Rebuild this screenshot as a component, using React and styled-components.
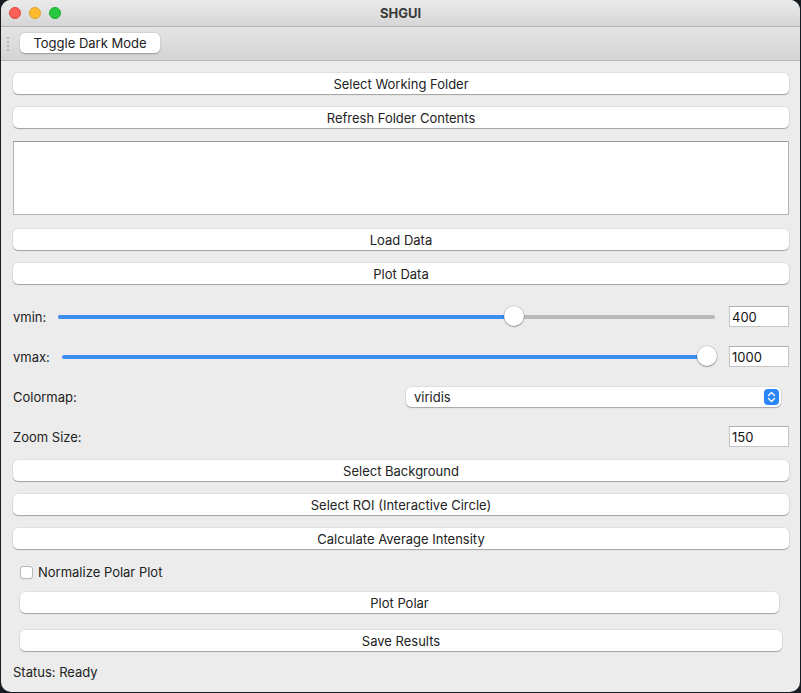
import React from 'react'
import styled, {createGlobalStyle} from 'styled-components'

const GlobalStyle = createGlobalStyle`
    html, body {
        margin: 0;
        padding: 0;
        background: #161c22;
    }
    body {
        font-family: Inter, "Noto Sans", "Liberation Sans", sans-serif;
        font-size: 13px;
        color: #222;
    }
`

const Window = styled.div`
    width: 799px;
    height: 692px;
    margin-left: 1px;
    border-radius: 10px;
    overflow: hidden;
    background: #ececec;
    display: flex;
    flex-direction: column;
`

const TitleBar = styled.header`
    position: relative;
    height: 26px;
    display: flex;
    align-items: center;
    justify-content: center;
    background: linear-gradient(#ebebeb, #d6d6d6);
    border-bottom: 1px solid #b3b3b3;
    font-weight: 700;
    font-size: 13px;
    color: #3a3a3a;
`

const Lights = styled.div`
    position: absolute;
    left: 8px;
    top: 7px;
    display: flex;
    gap: 8px;
`

const Light = styled.span`
    width: 12px;
    height: 12px;
    border-radius: 50%;
    box-sizing: border-box;
    background: ${props => props.color};
    border: 0.5px solid ${props => props.edge};
`

const ToolBar = styled.div`
    height: 33px;
    display: flex;
    align-items: center;
    gap: 10px;
    padding-left: 5px;
    background: linear-gradient(#e4e4e4, #d4d4d4);
    border-bottom: 1px solid #b9b9b9;
`

const ToolButton = styled.button`
    width: 140px;
    height: 20px;
    margin-top: -1px;
    border: none;
    border-radius: 5px;
    background: #fff;
    box-shadow: 0 0.5px 1.5px rgba(0, 0, 0, 0.3);
    font: inherit;
    color: #222;
    padding: 0;
`

const Content = styled.main`
    flex: 1;
    display: flex;
    flex-direction: column;
    padding: 12px 11px 0 12px;
`

const Button = styled.button`
    height: 21px;
    flex-shrink: 0;
    margin: ${props => props.space ?? 13}px ${props => props.right || 0}px 0 ${props => props.left || 0}px;
    border: none;
    border-radius: 5px;
    background: #fff;
    box-shadow: 0 0 0 0.5px rgba(0, 0, 0, 0.1), 0 1px 1px rgba(0, 0, 0, 0.28);
    font: inherit;
    color: #222;
    padding: 0;
`

const ListBox = styled.div`
    height: 74px;
    margin-top: 13px;
    box-sizing: border-box;
    background: #fff;
    border: 1px solid #b4b4b4;
    border-top-color: #9c9c9c;
`

const Row = styled.div`
    height: ${props => props.h || 21}px;
    margin-top: ${props => props.space || 13}px;
    display: flex;
    align-items: center;
    justify-content: space-between;
    flex-shrink: 0;
`

const Label = styled.span`
    white-space: nowrap;
`

const Slider = styled.div`
    flex: 1;
    position: relative;
    height: 21px;
    margin: 0 ${props => props.right}px 0 ${props => props.left}px;
    display: flex;
    align-items: center;
`

const Groove = styled.div`
    flex: 1;
    height: 4px;
    border-radius: 2px;
    background: #b9b9b9;
    overflow: hidden;
`

const Fill = styled.div`
    height: 100%;
    background: #3d8ef0;
`

const Thumb = styled.span`
    position: absolute;
    top: 0;
    width: 20px;
    height: 20px;
    margin-left: -10px;
    border-radius: 50%;
    background: #fff;
    box-shadow: 0 0 0 0.5px rgba(0, 0, 0, 0.2), 0 1px 1.5px rgba(0, 0, 0, 0.3);
`

const NumberField = styled.div`
    width: 60px;
    height: 21px;
    box-sizing: border-box;
    border: 1px solid #c4c4c4;
    border-top-color: #b0b0b0;
    background: #fff;
    padding-left: 2px;
    display: flex;
    align-items: center;
    color: #111;
`

const Combo = styled.div`
    width: 375px;
    height: 20px;
    margin-right: 8px;
    box-sizing: border-box;
    border-radius: 5px;
    background: #fff;
    box-shadow: 0 0 0 0.5px rgba(0, 0, 0, 0.12), 0 1px 1px rgba(0, 0, 0, 0.25);
    display: flex;
    align-items: center;
    justify-content: space-between;
    padding: 0 2px 0 8px;
`

const ComboArrows = styled.span`
    width: 15px;
    height: 16px;
    border-radius: 4px;
    background: #2a86f7;
    display: flex;
    align-items: center;
    justify-content: center;
`

const CheckRow = styled.label`
    display: flex;
    align-items: center;
    gap: 5px;
    height: 20px;
    margin: 13px 0 0 7px;
`

const CheckBox = styled.span`
    width: 13px;
    height: 13px;
    box-sizing: border-box;
    border-radius: 3px;
    background: #fff;
    border: 1px solid #b8b8b8;
    box-shadow: 0 0.5px 0.5px rgba(0, 0, 0, 0.08);
`

const Status = styled.div`
    margin-top: 13px;
    height: 16px;
    display: flex;
    align-items: center;
`

const Grip = () => (
    <svg width="4" height="16" viewBox="0 0 4 16">
        {[2, 6, 10, 14].map(y => <circle key={y} cx="2" cy={y} r="1" fill="#a8a8a8" />)}
    </svg>
)

const RangeRow = ({label, value, percent, left, right, space}) => (
    <Row space={space}>
        <Label>{label}</Label>
        <Slider left={left} right={right}>
            <Groove><Fill style={{width: `${percent}%`}} /></Groove>
            <Thumb style={{left: `calc(10px + (100% - 20px) * ${percent / 100})`}} />
        </Slider>
        <NumberField>{value}</NumberField>
    </Row>
)

export default function App() {
    return (
        <>
            <GlobalStyle />
            <Window>
                <TitleBar>
                    <Lights>
                        <Light color="#fe5f57" edge="#e0443e" />
                        <Light color="#febc2e" edge="#dea123" />
                        <Light color="#28c840" edge="#1aab29" />
                    </Lights>
                    SHGUI
                </TitleBar>
                <ToolBar>
                    <Grip />
                    <ToolButton>Toggle Dark Mode</ToolButton>
                </ToolBar>
                <Content>
                    <Button space={0}>Select Working Folder</Button>
                    <Button>Refresh Folder Contents</Button>
                    <ListBox />
                    <Button space={14}>Load Data</Button>
                    <Button>Plot Data</Button>
                    <RangeRow label="vmin:" value="400" percent={70} left={12} right={14} space={22} />
                    <RangeRow label="vmax:" value="1000" percent={100} left={12} right={12} space={19} />
                    <Row h={20} space={20}>
                        <Label>Colormap:</Label>
                        <Combo>
                            <span>viridis</span>
                            <ComboArrows>
                                <svg width="9" height="12" viewBox="0 0 9 12" fill="none" stroke="#fff" strokeWidth="1.4" strokeLinecap="round" strokeLinejoin="round">
                                    <path d="M1.5 4.5 L4.5 1.5 L7.5 4.5" />
                                    <path d="M1.5 7.5 L4.5 10.5 L7.5 7.5" />
                                </svg>
                            </ComboArrows>
                        </Combo>
                    </Row>
                    <Row space={19}>
                        <Label>Zoom Size:</Label>
                        <NumberField>150</NumberField>
                    </Row>
                    <Button>Select Background</Button>
                    <Button>Select ROI (Interactive Circle)</Button>
                    <Button>Calculate Average Intensity</Button>
                    <CheckRow>
                        <CheckBox />
                        Normalize Polar Plot
                    </CheckRow>
                    <Button space={10} left={7} right={10}>Plot Polar</Button>
                    <Button space={17} left={7} right={7}>Save Results</Button>
                    <Status>Status: Ready</Status>
                </Content>
            </Window>
        </>
    )
}
